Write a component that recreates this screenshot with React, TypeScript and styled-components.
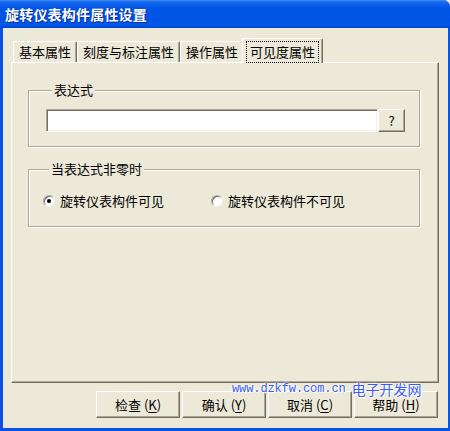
import styled, { createGlobalStyle } from "styled-components";

const GlobalStyle = createGlobalStyle`
  html, body {
    margin: 0;
    padding: 0;
    background: #ECE9D8;
  }
  body {
    font-family: "Noto Sans CJK SC", "Liberation Sans", sans-serif;
    font-size: 13px;
    color: #000;
  }
`;

const Window = styled.div`
  position: relative;
  width: 450px;
  height: 431px;
  display: flex;
  flex-direction: column;
  background: #0A52E4;
  border-radius: 0 7px 0 0;
  overflow: hidden;
`;

const TitleBar = styled.div`
  height: 28px;
  flex: none;
  display: flex;
  align-items: center;
  padding-left: 5px;
  background: linear-gradient(
    to bottom,
    #3C8CF8 0%,
    #1566EE 8%,
    #0055E5 30%,
    #0054E3 70%,
    #0058EA 88%,
    #0046D4 100%
  );
`;

const Title = styled.span`
  color: #fff;
  font-weight: bold;
  font-size: 14px;
  line-height: 16px;
  letter-spacing: 0.2px;
  text-shadow: 1px 1px 0 #0A2A8A;
`;

const Body = styled.div`
  flex: 1;
  display: flex;
  flex-direction: column;
  margin: 0 2px 3px 3px;
  background: #ECE9D8;
`;

const TabArea = styled.div`
  flex: 1;
  display: flex;
  flex-direction: column;
  padding: 10px 9px 0 8px;
`;

const TabRow = styled.div`
  display: flex;
  align-items: flex-end;
  height: 24px;
  padding-left: 2px;
`;

const Tab = styled.div<{ $active?: boolean }>`
  position: relative;
  z-index: ${(p) => (p.$active ? 2 : 1)};
  box-sizing: border-box;
  height: ${(p) => (p.$active ? 25 : 21)}px;
  margin: ${(p) => (p.$active ? "0 -2px -1px -2px" : "0")};
  padding: ${(p) => (p.$active ? "2px 6px 0" : "0 5px")};
  display: flex;
  align-items: center;
  background: #ECE9D8;
  border-top: 1px solid #fff;
  border-left: 1px solid #fff;
  border-right: 1px solid #716F64;
  border-radius: 2px 2px 0 0;
  box-shadow: inset -1px 0 0 #ACA899;
  line-height: 16px;
  white-space: nowrap;
`;

const FocusLabel = styled.span`
  outline: 1px dotted #000;
  outline-offset: 2px;
  padding: 0 1px;
`;

const Panel = styled.div`
  flex: 1;
  display: flex;
  flex-direction: column;
  padding: 27px 18px 0 16px;
  border-top: 1px solid #fff;
  border-left: 1px solid #fff;
  border-right: 1px solid #716F64;
  border-bottom: 1px solid #716F64;
  box-shadow: inset -1px -1px 0 #ACA899;
`;

const GroupBox = styled.div<{ $gap?: number }>`
  margin-top: ${(p) => p.$gap ?? 0}px;
  padding: 0 14px ${(p) => (p.$gap ? 17 : 14)}px ${(p) => (p.$gap ? 14 : 17)}px;
  border: 1px solid #ACA899;
  box-shadow: inset 1px 1px 0 #fff, 1px 1px 0 #fff;
`;

const Caption = styled.div`
  width: fit-content;
  margin: -9px 0 0 6px;
  padding: 0 2px;
  background: #ECE9D8;
  line-height: 16px;
`;

const InputRow = styled.div`
  display: flex;
  margin-top: 11px;
`;

const TextBox = styled.div`
  flex: 1;
  height: 23px;
  box-sizing: border-box;
  background: #fff;
  border-top: 1px solid #ACA899;
  border-left: 1px solid #ACA899;
  border-right: 1px solid #fff;
  border-bottom: 1px solid #fff;
  box-shadow: inset 1px 1px 0 #716F64, inset -1px -1px 0 #F1EFE2;
`;

const Button = styled.div<{ $w: number; $h: number }>`
  width: ${(p) => p.$w}px;
  height: ${(p) => p.$h}px;
  box-sizing: border-box;
  display: flex;
  align-items: center;
  justify-content: center;
  background: #ECE9D8;
  border-top: 1px solid #fff;
  border-left: 1px solid #fff;
  border-right: 1px solid #716F64;
  border-bottom: 1px solid #716F64;
  box-shadow: inset -1px -1px 0 #ACA899;
  line-height: 16px;
  white-space: nowrap;
  flex: none;
`;

const RadioRow = styled.div`
  display: flex;
  margin-top: 16px;
  height: 16px;
`;

const RadioOption = styled.label<{ $w?: number }>`
  display: flex;
  align-items: center;
  gap: 5px;
  width: ${(p) => (p.$w ? `${p.$w}px` : "auto")};
  line-height: 16px;
`;

const RadioCircle = styled.span<{ $checked?: boolean }>`
  width: 12px;
  height: 12px;
  box-sizing: border-box;
  border-radius: 50%;
  background: #fff;
  border: 1px solid;
  border-color: #ACA899 #F1EFE2 #F1EFE2 #ACA899;
  box-shadow: inset 1px 1px 0 #716F64;
  display: flex;
  align-items: center;
  justify-content: center;

  &::after {
    content: "";
    width: 4px;
    height: 4px;
    border-radius: 50%;
    background: ${(p) => (p.$checked ? "#000" : "transparent")};
  }
`;

const ButtonRow = styled.div`
  display: flex;
  justify-content: flex-end;
  gap: 2px;
  padding: 8px 10px 10px 0;
`;

const Accel = styled.span`
  text-decoration: underline;
  text-underline-offset: 2px;
`;

const Paren = styled.span`
  margin-left: 3px;
`;

const Watermark = styled.div`
  position: absolute;
  left: 232px;
  top: 381px;
  display: flex;
  align-items: center;
  gap: 6px;
  color: #3A5CF6;
  text-shadow: 0 0 2px #fff, 0 0 3px #fff, 1px 1px 1px #fff;
  white-space: nowrap;
  line-height: 16px;
`;

const WmLatin = styled.span`
  font-family: "Liberation Mono", "DejaVu Sans Mono", monospace;
  font-size: 12px;
  letter-spacing: -0.1px;
`;

const WmCjk = styled.span`
  font-size: 14px;
`;

const tabs = ["基本属性", "刻度与标注属性", "操作属性", "可见度属性"];

const actions = [
  { label: "检查", key: "K" },
  { label: "确认", key: "Y" },
  { label: "取消", key: "C" },
  { label: "帮助", key: "H" },
];

export default function App() {
  return (
    <>
      <GlobalStyle />
      <Window>
        <TitleBar>
          <Title>旋转仪表构件属性设置</Title>
        </TitleBar>
        <Body>
          <TabArea>
            <TabRow>
              {tabs.map((t, i) =>
                i === 3 ? (
                  <Tab key={t} $active>
                    <FocusLabel>{t}</FocusLabel>
                  </Tab>
                ) : (
                  <Tab key={t}>{t}</Tab>
                )
              )}
            </TabRow>
            <Panel>
              <GroupBox>
                <Caption>表达式</Caption>
                <InputRow>
                  <TextBox />
                  <Button $w={27} $h={23}>?</Button>
                </InputRow>
              </GroupBox>
              <GroupBox $gap={22}>
                <Caption>当表达式非零时</Caption>
                <RadioRow>
                  <RadioOption $w={168}>
                    <RadioCircle $checked />
                    旋转仪表构件可见
                  </RadioOption>
                  <RadioOption>
                    <RadioCircle />
                    旋转仪表构件不可见
                  </RadioOption>
                </RadioRow>
              </GroupBox>
            </Panel>
          </TabArea>
          <ButtonRow>
            {actions.map((a) => (
              <Button key={a.key} $w={84} $h={27}>
                {a.label}
                <Paren>(</Paren>
                <Accel>{a.key}</Accel>)
              </Button>
            ))}
          </ButtonRow>
        </Body>
        <Watermark>
          <WmLatin>www.dzkfw.com.cn</WmLatin>
          <WmCjk>电子开发网</WmCjk>
        </Watermark>
      </Window>
    </>
  );
}
